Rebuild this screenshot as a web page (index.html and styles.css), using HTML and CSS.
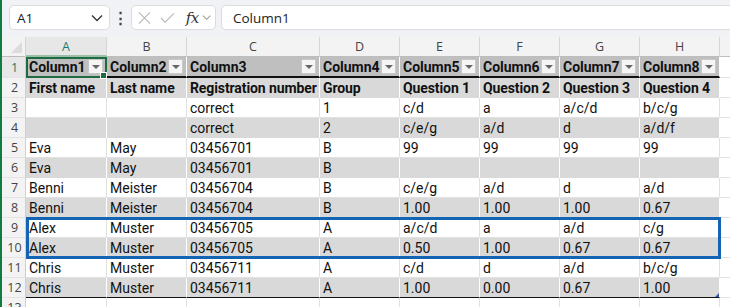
FILE: index.html
```html
<!DOCTYPE html>
<html>
<head>
<meta charset="utf-8">
<link rel="stylesheet" href="styles.css">
</head>
<body>
<div class="app">
  <div class="toolbar">
    <div class="namebox">
      <span class="nb-text">A1</span>
      <svg class="chev" width="12" height="8" viewBox="0 0 12 8"><path d="M1 1.5 L6 6.5 L11 1.5" fill="none" stroke="#333" stroke-width="1.3"/></svg>
    </div>
    <div class="dots">⋮</div>
    <div class="fxgroup">
      <svg width="14" height="14" viewBox="0 0 14 14"><path d="M1 1 L13 13 M13 1 L1 13" stroke="#b8b8b8" stroke-width="1.2" fill="none"/></svg>
      <svg width="16" height="12" viewBox="0 0 16 12"><path d="M1 6 L5.5 10.5 L15 1" stroke="#b8b8b8" stroke-width="1.2" fill="none"/></svg>
      <span class="fx">fx</span>
      <svg width="10" height="7" viewBox="0 0 10 7"><path d="M1 1.5 L5 5.5 L9 1.5" fill="none" stroke="#999" stroke-width="1.1"/></svg>
    </div>
    <div class="formula">Column1</div>
  </div>
  <div class="sheet">
    <div class="corner"><span class="tri"></span></div>
    <div class="ch sel">A</div><div class="ch">B</div><div class="ch">C</div><div class="ch">D</div><div class="ch">E</div><div class="ch">F</div><div class="ch">G</div><div class="ch">H</div><div class="ch last"></div>

    <div class="rh sel r1">1</div>
    <div class="c hd r1 active">Column1<span class="dd"></span></div>
    <div class="c hd r1">Column2<span class="dd"></span></div>
    <div class="c hd r1">Column3<span class="dd"></span></div>
    <div class="c hd r1">Column4<span class="dd"></span></div>
    <div class="c hd r1">Column5<span class="dd"></span></div>
    <div class="c hd r1">Column6<span class="dd"></span></div>
    <div class="c hd r1">Column7<span class="dd"></span></div>
    <div class="c hd r1">Column8<span class="dd"></span></div>
    <div class="c e r1"></div>

    <div class="rh">2</div>
    <div class="c g b">First name</div><div class="c g b">Last name</div><div class="c g b">Registration number</div><div class="c g b">Group</div><div class="c g b ctr">Question 1</div><div class="c g b ctr">Question 2</div><div class="c g b ctr">Question 3</div><div class="c g b ctr">Question 4</div><div class="c e"></div>

    <div class="rh">3</div>
    <div class="c w"></div><div class="c w"></div><div class="c w">correct</div><div class="c w">1</div><div class="c w">c/d</div><div class="c w">a</div><div class="c w">a/c/d</div><div class="c w">b/c/g</div><div class="c e"></div>

    <div class="rh">4</div>
    <div class="c g"></div><div class="c g"></div><div class="c g">correct</div><div class="c g">2</div><div class="c g">c/e/g</div><div class="c g">a/d</div><div class="c g">d</div><div class="c g">a/d/f</div><div class="c e"></div>

    <div class="rh">5</div>
    <div class="c w">Eva</div><div class="c w">May</div><div class="c w">03456701</div><div class="c w">B</div><div class="c w">99</div><div class="c w">99</div><div class="c w">99</div><div class="c w">99</div><div class="c e"></div>

    <div class="rh">6</div>
    <div class="c g">Eva</div><div class="c g">May</div><div class="c g">03456701</div><div class="c g">B</div><div class="c g"></div><div class="c g"></div><div class="c g"></div><div class="c g"></div><div class="c e"></div>

    <div class="rh">7</div>
    <div class="c w">Benni</div><div class="c w">Meister</div><div class="c w">03456704</div><div class="c w">B</div><div class="c w">c/e/g</div><div class="c w">a/d</div><div class="c w">d</div><div class="c w">a/d</div><div class="c e"></div>

    <div class="rh">8</div>
    <div class="c g">Benni</div><div class="c g">Meister</div><div class="c g">03456704</div><div class="c g">B</div><div class="c g">1.00</div><div class="c g">1.00</div><div class="c g">1.00</div><div class="c g">0.67</div><div class="c e"></div>

    <div class="rh">9</div>
    <div class="c w">Alex</div><div class="c w">Muster</div><div class="c w">03456705</div><div class="c w">A</div><div class="c w">a/c/d</div><div class="c w">a</div><div class="c w">a/d</div><div class="c w">c/g</div><div class="c e"></div>

    <div class="rh">10</div>
    <div class="c g">Alex</div><div class="c g">Muster</div><div class="c g">03456705</div><div class="c g">A</div><div class="c g">0.50</div><div class="c g">1.00</div><div class="c g">0.67</div><div class="c g">0.67</div><div class="c e"></div>

    <div class="rh">11</div>
    <div class="c w">Chris</div><div class="c w">Muster</div><div class="c w">03456711</div><div class="c w">A</div><div class="c w">c/d</div><div class="c w">d</div><div class="c w">a/d</div><div class="c w">b/c/g</div><div class="c e"></div>

    <div class="rh">12</div>
    <div class="c g last-row">Chris</div><div class="c g last-row">Muster</div><div class="c g last-row">03456711</div><div class="c g last-row">A</div><div class="c g last-row">1.00</div><div class="c g last-row">0.00</div><div class="c g last-row">0.67</div><div class="c g last-row handle">1.00</div><div class="c e"></div>

    <div class="rh">13</div>
    <div class="c w"></div><div class="c w"></div><div class="c w"></div><div class="c w"></div><div class="c w"></div><div class="c w"></div><div class="c w"></div><div class="c w"></div><div class="c e"></div>

    <div class="selbox"></div>
  </div>
</div>
</body>
</html>
```
FILE: styles.css
```css
* { box-sizing: border-box; }
html, body { margin: 0; padding: 0; }
body {
  width: 730px;
  height: 307px;
  overflow: hidden;
  background: #fff;
  font-family: "Liberation Sans", Arial, sans-serif;
}
.app {
  border-left: 2px solid #107c41;
  height: 307px;
  display: flex;
  flex-direction: column;
  overflow: hidden;
}
.toolbar {
  flex: 0 0 37px;
  height: 37px;
  background: #f0f2f5;
  display: flex;
  align-items: center;
  padding: 0 0 2px 7px;
}
.namebox {
  width: 101px;
  height: 25px;
  background: #fff;
  border: 1px solid #dcdcdc;
  border-radius: 5px;
  display: flex;
  align-items: center;
  justify-content: space-between;
  padding: 0 6px 0 7px;
  font-family: "Open Sans", sans-serif;
  font-size: 13.5px;
  color: #222;
}
.dots {
  width: 21px;
  text-align: center;
  font-size: 15px;
  font-weight: bold;
  color: #444;
}
.fxgroup {
  width: 85px;
  height: 25px;
  background: #fff;
  border: 1px solid #dcdcdc;
  border-radius: 5px;
  display: flex;
  align-items: center;
  padding: 0 4px 0 6px;
  gap: 9px;
}
.fx {
  font-family: "DejaVu Serif", "Liberation Serif", serif;
  font-style: italic;
  font-size: 15px;
  color: #333;
  margin-left: 2px;
  margin-right: -6px;
  letter-spacing: -0.5px;
}
.formula {
  flex: 1;
  margin-left: 5px;
  height: 25px;
  background: #fff;
  border: 1px solid #dcdcdc;
  border-right: none;
  border-radius: 5px 0 0 5px;
  display: flex;
  align-items: center;
  padding-left: 11px;
  font-family: "Open Sans", sans-serif;
  font-size: 13.5px;
  color: #222;
}
.sheet {
  position: relative;
  flex: 1 1 auto;
  min-height: 0;
  overflow: hidden;
  display: grid;
  grid-template-columns: 24px 81px 80px 133px 80px 80px 80px 80px 80px 1fr;
  grid-template-rows: 20px 21px repeat(11, 20px) 20px;
  font-family: "Roboto", "Liberation Sans", sans-serif;
  font-size: 14px;
  color: #111;
}
.corner {
  background: #f3f3f3;
  border-right: 1px solid #d4d4d4;
  border-bottom: 1px solid #bdbdbd;
  position: relative;
}
.tri {
  position: absolute;
  right: 3px;
  bottom: 3px;
  width: 0; height: 0;
  border-left: 11px solid transparent;
  border-bottom: 11px solid #dcdcdc;
}
.ch {
  background: #f3f3f3;
  border-right: 1px solid #d6d6d6;
  border-bottom: 1px solid #bdbdbd;
  text-align: center;
  font-family: "Open Sans", sans-serif;
  font-size: 12.5px;
  line-height: 19px;
  color: #444;
}
.ch.sel {
  color: #1b7a6e;
  background: #e7e7e7;
  border-bottom: 2px solid #9dbfa9;
}
.ch.last { border-right: none; }
.rh {
  background: #f3f3f3;
  border-right: 1px solid #cfcfcf;
  border-bottom: 1px solid #e3e3e3;
  text-align: center;
  font-family: "Open Sans", sans-serif;
  font-size: 12.5px;
  color: #444;
  line-height: 19px;
  padding-left: 2px;
}
.rh.sel { color: #1b7a6e; background: #e7e7e7; line-height: 21px; }
.c {
  padding-left: 3px;
  white-space: nowrap;
  overflow: hidden;
  line-height: 20px;
  position: relative;
}
.c.w { background: #fff; border-right: 1px solid #e1e1e1; border-bottom: 1px solid #e1e1e1; }
.c.g { background: #d9d9d9; border-right: 1px solid #fff; }
.c.e { background: #fff; border-bottom: 1px solid #e1e1e1; }
.c.b { font-weight: bold; }
.c.hd {
  background: #bfbfbf;
  border-right: 1px solid #fff;
  border-bottom: 2px solid #111;
  font-weight: bold;
  line-height: 20px;
}
.c.e.r1 { border-bottom: 1px solid #e1e1e1; }
.c.hd.active { outline: 2px solid #1e6b41; outline-offset: -2px; overflow: visible; }
.c.hd.active::after {
  content: "";
  position: absolute;
  right: -1px;
  bottom: -3px;
  width: 5px;
  height: 5px;
  background: #1e6b41;
  border: 1px solid #fff;
  z-index: 2;
}
.dd {
  position: absolute;
  right: 3px;
  top: 2px;
  width: 15px;
  height: 15px;
  background: #f5f5f5;
  border: 1px solid #c8c8c8;
}
.dd::after {
  content: "";
  position: absolute;
  left: 3px;
  top: 5px;
  border-left: 4px solid transparent;
  border-right: 4px solid transparent;
  border-top: 4px solid #666;
}
.c.b { letter-spacing: -0.1px; }
.c.last-row { border-bottom: 1px solid #111; }
.handle::after {
  content: "";
  position: absolute;
  right: 0;
  bottom: 0;
  border-left: 4px solid transparent;
  border-bottom: 4px solid #3a5fa8;
}
.selbox {
  position: absolute;
  left: 24px;
  top: 180px;
  width: 695px;
  height: 42px;
  border: 3px solid #1464b4;
  pointer-events: none;
}
```
